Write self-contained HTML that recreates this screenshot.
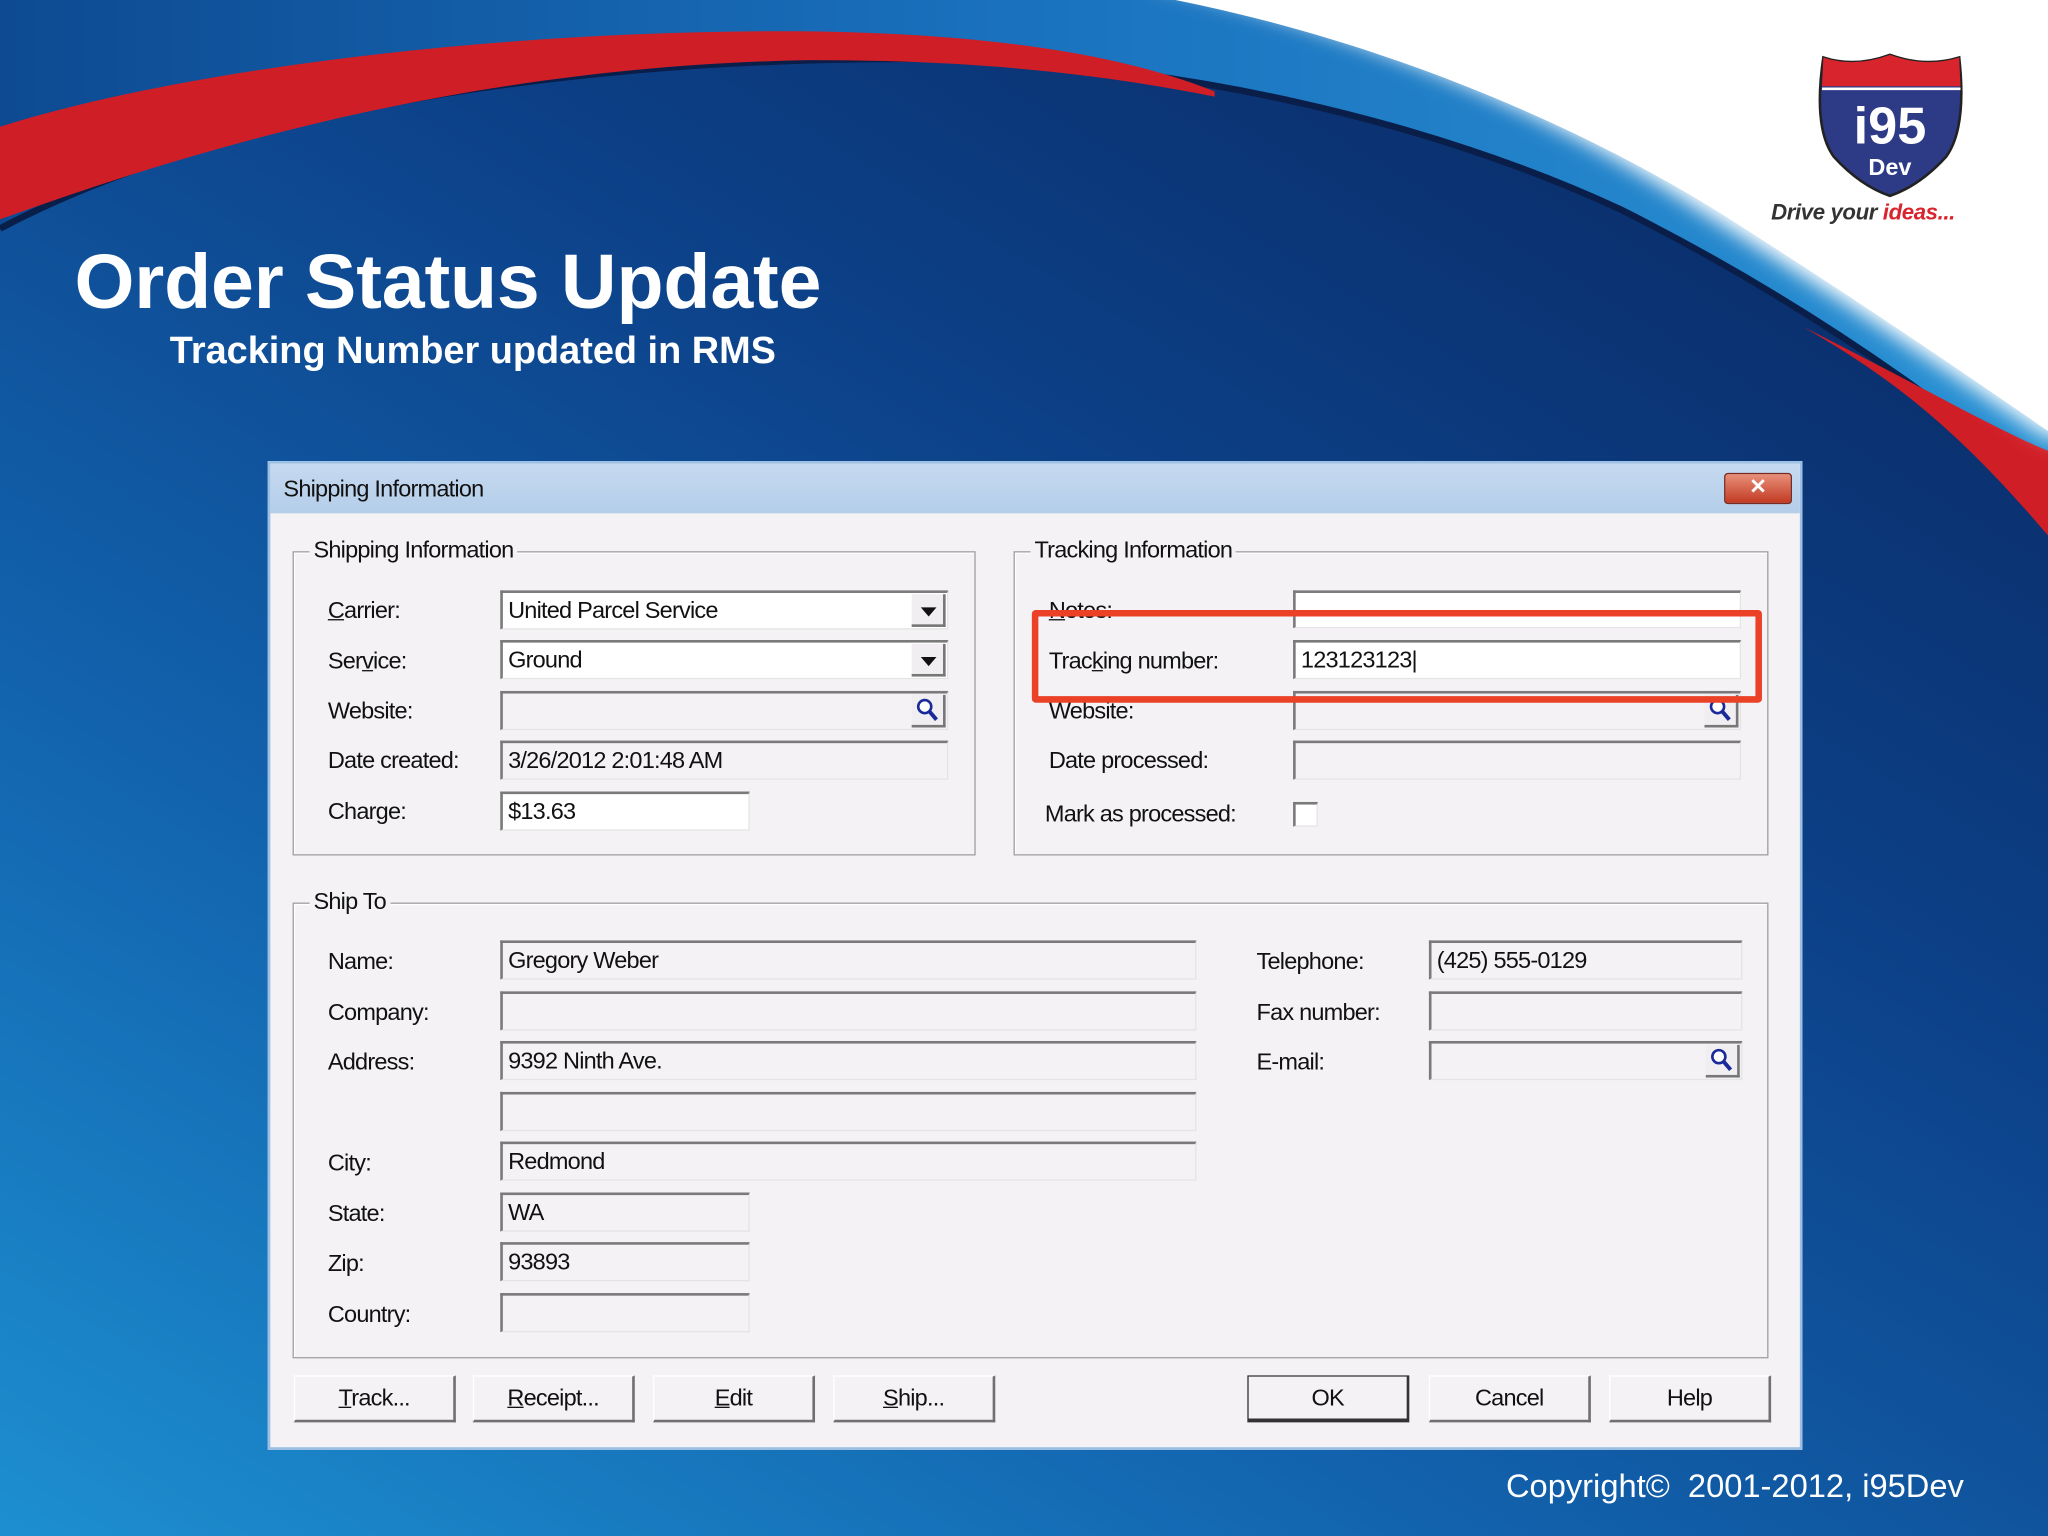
<!DOCTYPE html>
<html><head><meta charset="utf-8"><style>
html,body{margin:0;padding:0;width:2048px;height:1536px;overflow:hidden;background:#0b2f6e}
#s{position:absolute;left:0;top:0;width:1568px;height:1176px;transform:scale(1.306122);transform-origin:0 0;font-family:"Liberation Sans",sans-serif}
.a{position:absolute}
.l{position:absolute;font-size:18px;color:#111;letter-spacing:-0.6px;white-space:nowrap;line-height:20px}
.in{position:absolute;background:#fff;border-top:2px solid #7a7a7a;border-left:2px solid #7a7a7a;border-right:1px solid #e4e4e4;border-bottom:1px solid #e4e4e4;box-sizing:border-box;font-size:18px;letter-spacing:-0.6px;padding:3px 4px;line-height:20px;color:#111}
.ro{background:#f4f2f5}
.g{position:absolute;border:1px solid #a0a0a0;box-shadow:1px 1px 0 #fff inset;box-sizing:border-box}
.gt{position:absolute;top:-12px;left:12px;background:#f4f2f5;padding:0 3px;font-size:18px;letter-spacing:-0.6px;color:#111}
.b{position:absolute;top:1053px;height:36px;width:124px;box-sizing:border-box;background:#f4f2f5;border:1px solid #fff;border-right:2px solid #707070;border-bottom:2px solid #707070;font-size:18px;letter-spacing:-0.6px;text-align:center;line-height:32px;color:#111}
.dd{position:absolute;right:1px;top:1px;width:26px;bottom:1px;background:#f0eef0;border-right:2px solid #777;border-bottom:2px solid #777;box-sizing:border-box}
.dd:after{content:"";position:absolute;left:7px;top:10px;border-left:6px solid transparent;border-right:6px solid transparent;border-top:7px solid #111}
.mg{position:absolute;right:1px;top:1px;width:26px;bottom:1px;background:#f0eef0;border-right:2px solid #777;border-bottom:2px solid #777;box-sizing:border-box}
u{text-decoration:underline}
</style></head><body><div id="s">
<svg class="a" style="left:0;top:0" width="1568" height="1176" viewBox="0 0 1568 1176">
<defs>
<linearGradient id="bg" x1="0" y1="1" x2="0.8" y2="0">
<stop offset="0" stop-color="#1d8fd0"/><stop offset="0.35" stop-color="#1262ad"/><stop offset="0.7" stop-color="#0c3f86"/><stop offset="1" stop-color="#0a2b66"/></linearGradient>
<linearGradient id="lb" x1="0" y1="0" x2="1" y2="0"><stop offset="0" stop-color="#0d4a92"/><stop offset="0.5" stop-color="#1a72be"/><stop offset="1" stop-color="#2a92d4"/></linearGradient>
<filter id="bl" x="-10%" y="-10%" width="120%" height="120%"><feGaussianBlur stdDeviation="8"/></filter>
</defs>
<rect width="1568" height="1176" fill="url(#bg)"/>
<path d="M0 175 C150 95 400 45 700 45 C900 45 1100 95 1240 160 C1380 230 1490 310 1568 375 L1568 0 L0 0Z" fill="url(#lb)"/>
<path d="M0 175 C150 95 400 45 700 45 C900 45 1100 95 1240 160 C1380 230 1490 310 1568 375" fill="none" stroke="#0a1e4a" stroke-width="5"/>
<path d="M0 97 C150 50 400 22 620 24 C760 26 860 42 930 70 L930 74 C820 52 720 46 620 46 C400 50 200 95 0 168Z" fill="#d01e26"/>
<path d="M1380 250 C1470 295 1530 330 1568 345 L1568 410 C1500 330 1450 290 1380 250Z" fill="#d01e26"/>
<path d="M860 -20 C1030 20 1180 80 1300 160 C1420 235 1500 290 1568 335 L1600 335 L1600 -20Z" fill="#ffffff" filter="url(#bl)"/>
<path d="M900 0 C1050 30 1200 90 1320 165 C1430 235 1510 290 1568 330 L1568 0Z" fill="#ffffff"/>
</svg>
<!-- logo -->
<svg class="a" style="top:38px;left:1390px" width="115" height="115" viewBox="0 0 115 115">
<path d="M6 6 Q30 14 57 4 Q84 14 110 6 Q116 60 100 82 Q80 104 57 112 Q34 104 14 82 Q-2 60 6 6Z" fill="#2d3a86" stroke="#222" stroke-width="2"/>
<path d="M6 6 Q30 14 57 4 Q84 14 110 6 L111 28 L5 28Z" fill="#d8242c"/>
<path d="M5 30 L111 30" stroke="#fff" stroke-width="2"/>
<text x="57" y="72" text-anchor="middle" font-family="Liberation Sans" font-weight="bold" font-size="40" fill="#fff">i95</text>
<text x="57" y="96" text-anchor="middle" font-family="Liberation Sans" font-weight="bold" font-size="18" fill="#fff">Dev</text>
</svg>
<div class="a" style="left:1356px;top:153px;font-size:17px;font-weight:bold;font-style:italic;color:#333;white-space:nowrap;letter-spacing:-0.3px">Drive your <span style="color:#d8242c">ideas...</span></div>
<div class="a" style="left:57px;top:182px;font-size:59px;font-weight:bold;color:#fff;white-space:nowrap;letter-spacing:-0.1px">Order Status Update</div>
<div class="a" style="left:130px;top:253px;font-size:29px;font-weight:bold;color:#fff;white-space:nowrap">Tracking Number updated in RMS</div>
<div class="a" style="left:1153px;top:1124px;font-size:25px;color:#fff;white-space:nowrap">Copyright©&nbsp; 2001-2012, i95Dev</div>

<!-- dialog -->
<div class="a" style="left:205px;top:353px;width:1175px;height:757px;background:#f4f2f5;border:2px solid #9cc0e4;box-sizing:border-box"></div>
<div class="a" style="left:207px;top:355px;width:1171px;height:38px;background:linear-gradient(#c6daf0,#b4cde9)"></div>
<div class="l" style="left:217px;top:364px">Shipping Information</div>
<div class="a" style="left:1320px;top:362px;width:50px;height:22px;background:linear-gradient(#e8907a,#c23a22);border:1px solid #7a2a20;border-radius:3px;color:#fff;font-size:16px;font-weight:bold;text-align:center;line-height:22px">✕</div>

<div class="g" style="left:224px;top:422px;width:523px;height:233px"><span class="gt">Shipping Information</span></div>
<div class="g" style="left:776px;top:422px;width:578px;height:233px"><span class="gt">Tracking Information</span></div>
<div class="g" style="left:224px;top:691px;width:1130px;height:349px"><span class="gt">Ship To</span></div>

<div class="l" style="left:251px;top:457px"><u>C</u>arrier:</div>
<div class="l" style="left:251px;top:496px">Ser<u>v</u>ice:</div>
<div class="l" style="left:251px;top:534px">Website:</div>
<div class="l" style="left:251px;top:572px">Date created:</div>
<div class="l" style="left:251px;top:611px">Charge:</div>
<div class="in" style="left:383px;top:452px;width:343px;height:30px">United Parcel Service<span class="dd"></span></div>
<div class="in" style="left:383px;top:490px;width:343px;height:30px">Ground<span class="dd"></span></div>
<div class="in ro" style="left:383px;top:529px;width:343px;height:30px"><span class="mg"><svg width="22" height="22" style="position:absolute;left:1px;top:1px"><circle cx="9" cy="8" r="5" fill="#fff" stroke="#1a2a9a" stroke-width="2"/><path d="M12 11 L18 18" stroke="#1a2a9a" stroke-width="3"/></svg></span></div>
<div class="in ro" style="left:383px;top:567px;width:343px;height:30px">3/26/2012 2:01:48 AM</div>
<div class="in" style="left:383px;top:606px;width:191px;height:30px">$13.63</div>

<div class="l" style="left:803px;top:457px"><u>N</u>otes:</div>
<div class="l" style="left:803px;top:496px">Trac<u>k</u>ing number:</div>
<div class="l" style="left:803px;top:534px">Website:</div>
<div class="l" style="left:803px;top:572px">Date processed:</div>
<div class="l" style="left:800px;top:613px">Mark as processed:</div>
<div class="in" style="left:990px;top:452px;width:343px;height:29px"></div>
<div class="in" style="left:990px;top:490px;width:343px;height:30px">123123123|</div>
<div class="in ro" style="left:990px;top:529px;width:343px;height:30px"><span class="mg"><svg width="22" height="22" style="position:absolute;left:1px;top:1px"><circle cx="9" cy="8" r="5" fill="#fff" stroke="#1a2a9a" stroke-width="2"/><path d="M12 11 L18 18" stroke="#1a2a9a" stroke-width="3"/></svg></span></div>
<div class="in ro" style="left:990px;top:567px;width:343px;height:30px"></div>
<div class="in" style="left:990px;top:614px;width:19px;height:19px;padding:0"></div>
<div class="a" style="left:790px;top:467px;width:559px;height:71px;border:5px solid #ea4127;border-radius:3px;box-sizing:border-box"></div>

<div class="l" style="left:251px;top:726px">Name:</div>
<div class="l" style="left:251px;top:765px">Company:</div>
<div class="l" style="left:251px;top:803px">Address:</div>
<div class="l" style="left:251px;top:880px">City:</div>
<div class="l" style="left:251px;top:919px">State:</div>
<div class="l" style="left:251px;top:957px">Zip:</div>
<div class="l" style="left:251px;top:996px">Country:</div>
<div class="in ro" style="left:383px;top:720px;width:533px;height:30px">Gregory Weber</div>
<div class="in ro" style="left:383px;top:759px;width:533px;height:30px"></div>
<div class="in ro" style="left:383px;top:797px;width:533px;height:30px">9392 Ninth Ave.</div>
<div class="in ro" style="left:383px;top:836px;width:533px;height:30px"></div>
<div class="in ro" style="left:383px;top:874px;width:533px;height:30px">Redmond</div>
<div class="in ro" style="left:383px;top:913px;width:191px;height:30px">WA</div>
<div class="in ro" style="left:383px;top:951px;width:191px;height:30px">93893</div>
<div class="in ro" style="left:383px;top:990px;width:191px;height:30px"></div>
<div class="l" style="left:962px;top:726px">Telephone:</div>
<div class="l" style="left:962px;top:765px">Fax number:</div>
<div class="l" style="left:962px;top:803px">E-mail:</div>
<div class="in ro" style="left:1094px;top:720px;width:240px;height:30px">(425) 555-0129</div>
<div class="in ro" style="left:1094px;top:759px;width:240px;height:30px"></div>
<div class="in ro" style="left:1094px;top:797px;width:240px;height:30px"><span class="mg"><svg width="22" height="22" style="position:absolute;left:1px;top:1px"><circle cx="9" cy="8" r="5" fill="#fff" stroke="#1a2a9a" stroke-width="2"/><path d="M12 11 L18 18" stroke="#1a2a9a" stroke-width="3"/></svg></span></div>

<div class="b" style="left:225px"><u>T</u>rack...</div>
<div class="b" style="left:362px"><u>R</u>eceipt...</div>
<div class="b" style="left:500px"><u>E</u>dit</div>
<div class="b" style="left:638px"><u>S</u>hip...</div>
<div class="b" style="left:955px;border:1px solid #333;border-right:2px solid #333;border-bottom:3px solid #333">OK</div>
<div class="b" style="left:1094px">Cancel</div>
<div class="b" style="left:1232px">Help</div>
</div></body></html>
